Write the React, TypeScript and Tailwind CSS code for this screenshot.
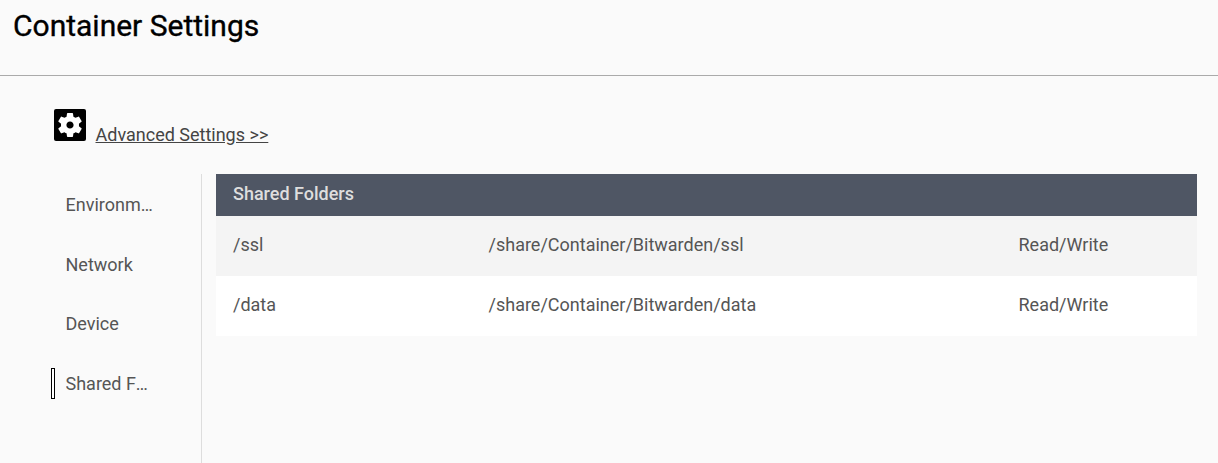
const ROWS = [
  { name: "/ssl", path: "/share/Container/Bitwarden/ssl", mode: "Read/Write", bg: "bg-[#f4f4f4]" },
  { name: "/data", path: "/share/Container/Bitwarden/data", mode: "Read/Write", bg: "bg-white" },
];

const TABS = ["Environment", "Network", "Device", "Shared Folders"];

function GearBox() {
  return (
    <svg width="32" height="32" viewBox="0 0 32 32" className="block shrink-0">
      <rect width="32" height="32" rx="2" fill="#000" />
      <g transform="translate(1.6 1.6) scale(1.2)">
        <path
          fill="#fff"
          fillRule="evenodd"
          d="M19.43 12.98c.04-.32.07-.64.07-.98s-.03-.66-.07-.98l2.11-1.65c.19-.15.24-.42.12-.64l-2-3.46c-.12-.22-.39-.3-.61-.22l-2.49 1c-.52-.4-1.08-.73-1.69-.98l-.38-2.65C14.46 2.18 14.25 2 14 2h-4c-.25 0-.46.18-.49.42l-.38 2.65c-.61.25-1.17.59-1.69.98l-2.49-1c-.23-.09-.49 0-.61.22l-2 3.46c-.13.22-.07.49.12.64l2.11 1.65c-.04.32-.07.65-.07.98s.03.66.07.98l-2.11 1.65c-.19.15-.24.42-.12.64l2 3.46c.12.22.39.3.61.22l2.49-1c.52.4 1.08.73 1.69.98l.38 2.65c.03.24.24.42.49.42h4c.25 0 .46-.18.49-.42l.38-2.65c.61-.25 1.17-.59 1.69-.98l2.49 1c.23.09.49 0 .61-.22l2-3.46c.12-.22.07-.49-.12-.64l-2.11-1.65zM12 15c-1.66 0-3-1.34-3-3s1.34-3 3-3 3 1.34 3 3-1.34 3-3 3z"
        />
      </g>
    </svg>
  );
}

export default function App() {
  return (
    <div className="w-[1218px] h-[463px] overflow-hidden bg-[#fafafa] font-['Roboto',sans-serif] text-[#333]">
      <div className="h-[76px] border-b border-[#aaa] pl-[13px] pt-[9px]">
        <h1 className="text-[30px] leading-[34px] text-black [-webkit-text-stroke:0.35px_black]">Container Settings</h1>
      </div>

      <div className="flex items-start pl-[54px] pt-[33px] h-[98px]">
        <GearBox />
        <a className="ml-[9.5px] mt-[15px] text-[18px] leading-[21px] underline text-[#444]">Advanced Settings &gt;&gt;</a>
      </div>

      <div className="flex h-[289px]">
        <div className="w-[202px] shrink-0 border-r border-[#ddd] pl-[51px] pt-[1.4px]">
          {TABS.map((t, i) => (
            <div key={t} className="flex items-center h-[59.6px]">
              <div className={i === 3 ? "w-[4px] h-[31px] border border-black bg-white shrink-0" : "w-[4px] h-[31px] shrink-0"} />
              <div className="ml-[10.5px] w-[88px] truncate text-[18px] leading-[24px] text-[#555]">{t}</div>
            </div>
          ))}
        </div>

        <div className="flex-1 pl-[14px] pr-[21px]">
          <div className="h-[42px] bg-[#4f5664] flex items-center pl-[17px] pb-[4px] text-[18px] font-medium text-[#dedede]">
            Shared Folders
          </div>
          {ROWS.map((r) => (
            <div key={r.name} className={`flex items-center h-[60px] pl-[17px] pb-[4px] text-[18px] text-[#555] ${r.bg}`}>
              <div className="w-[255.5px]">{r.name}</div>
              <div className="w-[530px]">{r.path}</div>
              <div>{r.mode}</div>
            </div>
          ))}
        </div>
      </div>
    </div>
  );
}
